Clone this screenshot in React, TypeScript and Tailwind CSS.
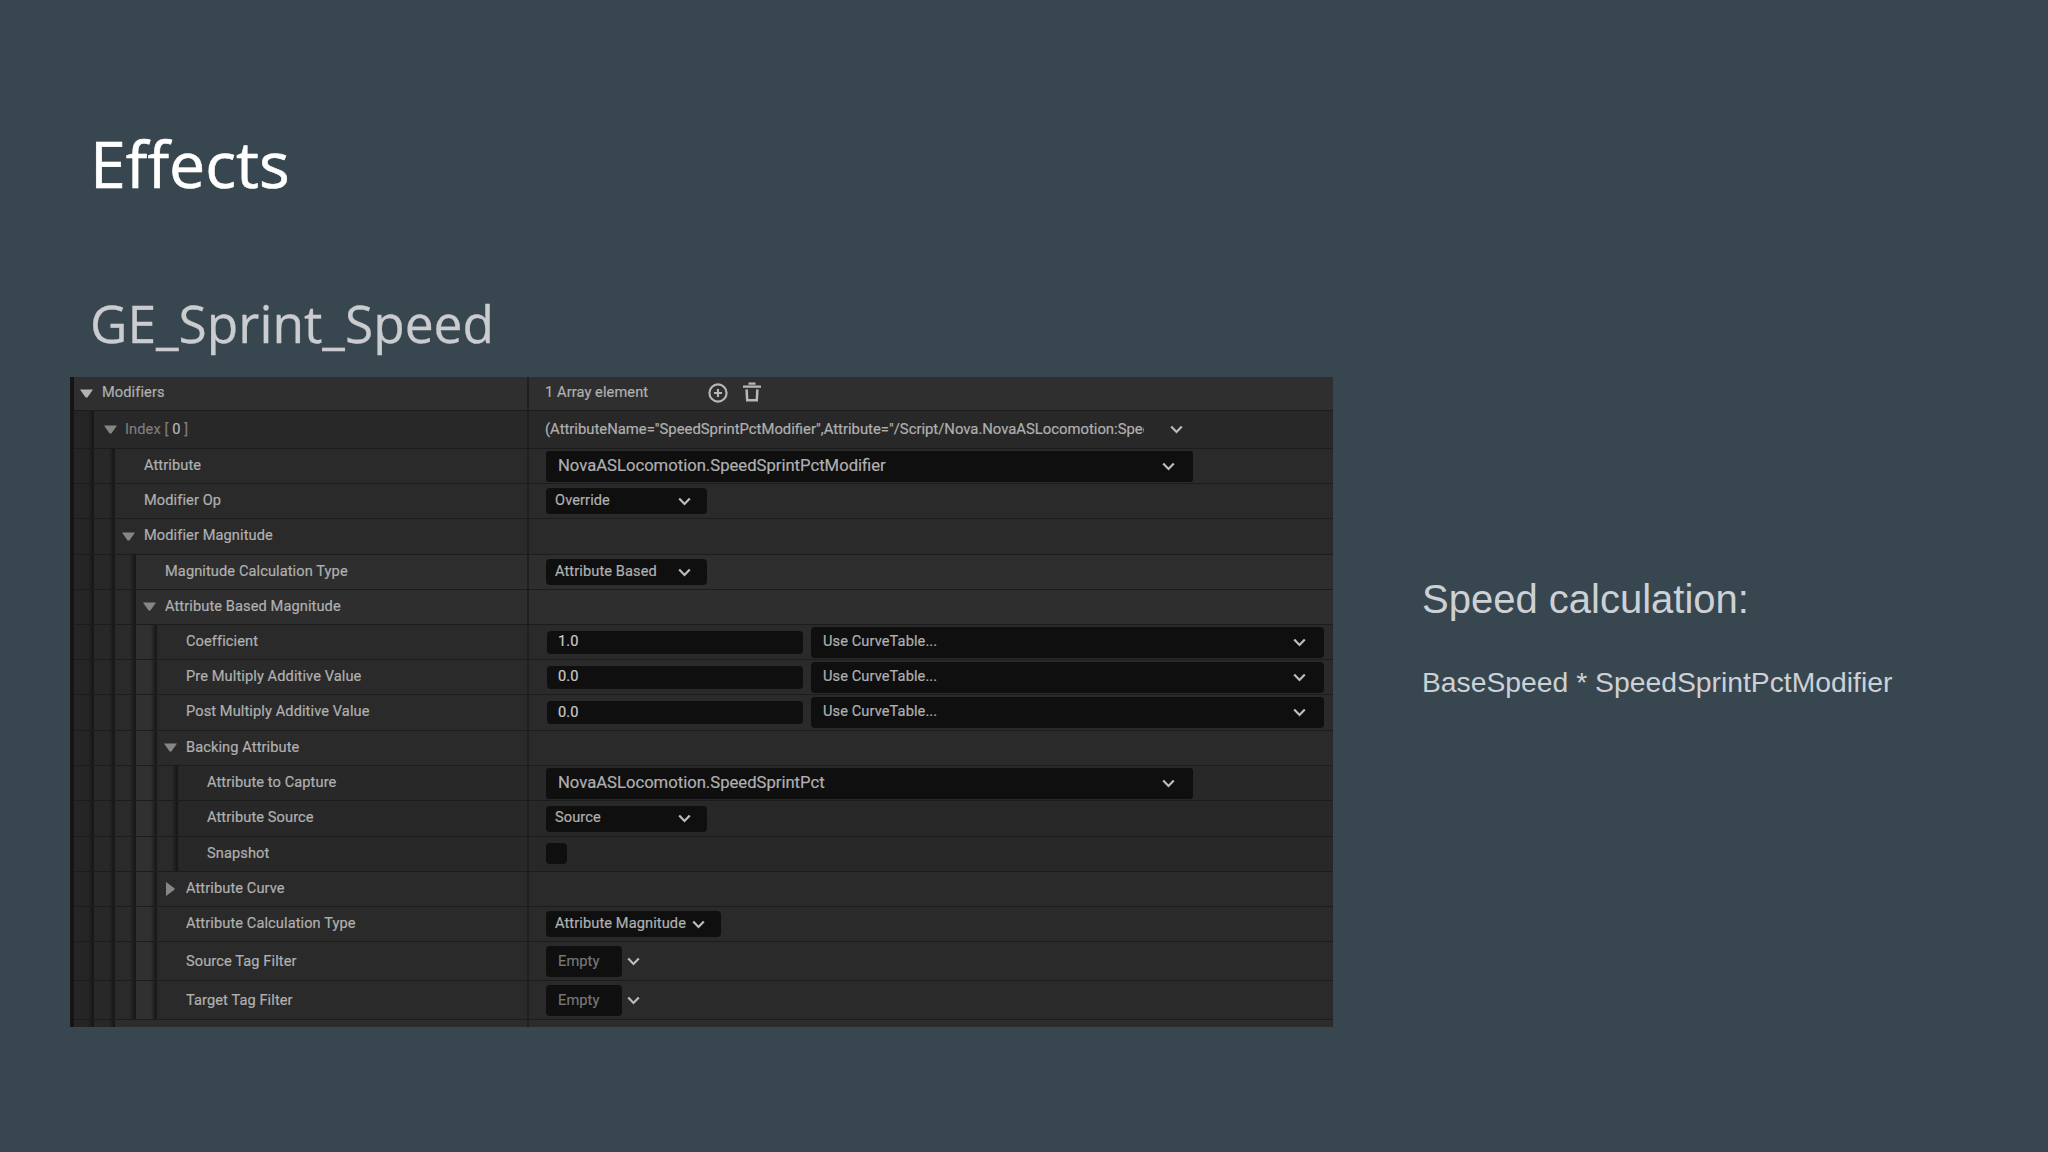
import React from 'react';
import { clsx } from 'clsx';

type Row = {
  name: React.ReactNode;
  depth: number;
  height: string;
  arrow?: 'open' | 'closed';
  tone?: string;
  nameClass?: string;
  value?: React.ReactNode;
};

function Chevron({ className }: { className?: string }) {
  return (
    <svg className={clsx('w-[13px] h-[9px] shrink-0', className)} viewBox="0 0 13 9" fill="none">
      <path d="M1.2 1.4 6.5 6.9 11.8 1.4" stroke="#bdbdbd" strokeWidth="2.2" />
    </svg>
  );
}

function Arrow({ state, bright }: { state?: 'open' | 'closed'; bright?: boolean }) {
  return (
    <svg className="w-[13px] h-[14px] shrink-0" viewBox="0 0 13 14">
      {state === 'open' && <path d="M0 2.6H13L7.4 10.6H5.6Z" fill={bright ? '#b4b4b4' : '#868686'} />}
      {state === 'closed' && <path d="M2 0 10.5 6.2V7.8L2 14Z" fill="#868686" />}
    </svg>
  );
}

function Combo({ label, width, pad = 'pr-4' }: { label: string; width: string; pad?: string }) {
  return (
    <div className={clsx('h-[26px] pl-[9px] flex items-center justify-between rounded-[4px] bg-[#0f0f0f]', width, pad)}>
      <span className="-mt-px">{label}</span>
      <Chevron />
    </div>
  );
}

function AttributePicker({ label }: { label: string }) {
  return (
    <div className="w-[647px] h-[31px] pl-3 pr-[18px] flex items-center justify-between rounded-[3px] bg-[#0f0f0f] text-[16.65px] tracking-normal">
      <span>{label}</span>
      <Chevron />
    </div>
  );
}

function ScalableFloat({ value }: { value: string }) {
  return (
    <div className="flex items-center gap-2 ml-px">
      <div className="w-[256px] h-[23px] pl-[11px] flex items-center rounded-[4px] bg-[#0f0f0f] text-[#cacaca]">
        <span>{value}</span>
      </div>
      <div className="w-[513px] h-[31px] pl-3 pr-[18px] flex items-center justify-between rounded-[4px] bg-[#0f0f0f]">
        <span className="-mt-px">Use CurveTable...</span>
        <Chevron />
      </div>
    </div>
  );
}

function TagFilter() {
  return (
    <div className="flex items-center gap-[5px]">
      <div className="w-[76px] h-[31px] pl-3 flex items-center rounded-[4px] bg-[#0f0f0f] text-[#777]">
        <span className="mt-px">Empty</span>
      </div>
      <Chevron />
    </div>
  );
}

function ArrayHeader() {
  return (
    <div className="-ml-px flex items-center">
      <span className="w-[163px] -mt-[2px]">1 Array element</span>
      <svg className="w-5 h-5 -mt-px" viewBox="0 0 20 20" fill="none" stroke="#b8b8b8">
        <circle cx="10" cy="10" r="8.6" strokeWidth="2.1" />
        <path d="M10 6V14M6 10H14" strokeWidth="2.1" />
      </svg>
      <svg className="w-[18px] h-5 ml-[15px] -mt-[2px]" viewBox="0 0 18 20" fill="none" stroke="#b8b8b8">
        <path d="M0 4.6H18M5.5 1.6H12.5" strokeWidth="2.4" />
        <path d="M3.6 7.4 4.2 18.2H13.8L14.4 7.4" strokeWidth="2.5" />
      </svg>
    </div>
  );
}

function StructSummary() {
  return (
    <div className="-ml-px flex items-center">
      <span className="w-[599px] overflow-hidden whitespace-nowrap text-[14.84px] tracking-normal -mt-px">
        (AttributeName="SpeedSprintPctModifier",Attribute="/Script/Nova.NovaASLocomotion:Spee
      </span>
      <Chevron className="ml-[26px]" />
    </div>
  );
}

const indentWidths = ['w-[20px]', 'w-[21px]', 'w-[21px]', 'w-[21px]', 'w-[21px]'];
const indentTones = ['from-[#252525]', 'from-[#282828]', 'from-[#2a2a2a]', 'from-[#303030]', 'from-[#2a2a2a]'];

const rows: Row[] = [
  { name: 'Modifiers', depth: 0, height: 'h-[34px]', arrow: 'open', tone: 'bg-[#2f2f2f]', nameClass: '-mt-[2px]', value: <ArrayHeader /> },
  {
    name: <>Index [ <span className="text-[#b8b8b8]">0</span> ]</>,
    depth: 1,
    height: 'h-[38px]',
    arrow: 'open',
    tone: 'bg-[#282828]',
    nameClass: 'text-[#7d7d7d] -ml-px',
    value: <StructSummary />,
  },
  { name: 'Attribute', depth: 2, height: 'h-[35px]', value: <AttributePicker label="NovaASLocomotion.SpeedSprintPctModifier" /> },
  { name: 'Modifier Op', depth: 2, height: 'h-[35px]', value: <Combo label="Override" width="w-[161px]" /> },
  { name: 'Modifier Magnitude', depth: 2, height: 'h-[36px]', arrow: 'open' },
  { name: 'Magnitude Calculation Type', depth: 3, height: 'h-[35px]', tone: 'bg-[#2e2e2e]', value: <Combo label="Attribute Based" width="w-[161px]" /> },
  { name: 'Attribute Based Magnitude', depth: 3, height: 'h-[35px]', arrow: 'open', tone: 'bg-[#2e2e2e]' },
  { name: 'Coefficient', depth: 4, height: 'h-[35px]', value: <ScalableFloat value="1.0" /> },
  { name: 'Pre Multiply Additive Value', depth: 4, height: 'h-[35px]', value: <ScalableFloat value="0.0" /> },
  { name: 'Post Multiply Additive Value', depth: 4, height: 'h-[36px]', value: <ScalableFloat value="0.0" /> },
  { name: 'Backing Attribute', depth: 4, height: 'h-[35px]', arrow: 'open' },
  { name: 'Attribute to Capture', depth: 5, height: 'h-[35px]', tone: 'bg-[#282828]', value: <AttributePicker label="NovaASLocomotion.SpeedSprintPct" /> },
  { name: 'Attribute Source', depth: 5, height: 'h-[36px]', tone: 'bg-[#282828]', value: <Combo label="Source" width="w-[161px]" /> },
  { name: 'Snapshot', depth: 5, height: 'h-[35px]', tone: 'bg-[#282828]', value: <div className="w-[21px] h-[21px] -mt-px rounded-[4px] bg-[#0f0f0f]" /> },
  { name: 'Attribute Curve', depth: 4, height: 'h-[35px]', arrow: 'closed' },
  { name: 'Attribute Calculation Type', depth: 4, height: 'h-[35px]', value: <Combo label="Attribute Magnitude" width="w-[175px]" /> },
  { name: 'Source Tag Filter', depth: 4, height: 'h-[39px]', nameClass: 'mt-px', value: <TagFilter /> },
  { name: 'Target Tag Filter', depth: 4, height: 'h-[39px]', nameClass: 'mt-px', value: <TagFilter /> },
];

function Indents({ depth }: { depth: number }) {
  return (
    <>
      {indentWidths.slice(0, depth).map((width, i) => (
        <div key={i} className={clsx('shrink-0 bg-linear-to-r from-70% to-[#181818] to-95%', width, indentTones[i])} />
      ))}
    </>
  );
}

function DetailsPanel() {
  return (
    <div className="w-[1263px] h-[650px] border-l-4 border-[#151515] bg-[#2a2a2a] font-['Roboto',sans-serif] text-[14.6px] tracking-[0.1px] text-[#b0b0b0] [-webkit-text-stroke:0.2px] whitespace-nowrap overflow-hidden">
      {rows.map((row, i) => (
        <div key={i} className={clsx('flex border-b border-[#1c1c1c]', row.height, row.tone)}>
          <div className="w-[455px] shrink-0 flex border-r-2 border-[#1f1f1f]">
            <Indents depth={row.depth} />
            <div
              className={clsx(
                'flex items-center gap-[9px]',
                row.depth === 0 ? 'pl-[6px]' : row.depth === 1 ? 'pl-[10px]' : 'pl-[7px]'
              )}
            >
              <Arrow state={row.arrow} bright={row.depth === 0} />
              <span className={row.nameClass ?? '-mt-px'}>{row.name}</span>
            </div>
          </div>
          <div className="flex-1 pl-[17px] flex items-center">{row.value}</div>
        </div>
      ))}
      {/* Top of the next, cut off row */}
      <div className="h-[7px] flex bg-[#2d2c2d]">
        <div className="w-[455px] flex border-r-2 border-[#1f1f1f]">
          <Indents depth={2} />
        </div>
      </div>
    </div>
  );
}

export default function App() {
  return (
    <div className="w-[2048px] h-[1152px] flex bg-[#38474f] overflow-hidden">
      <div className="w-[1333px] pl-[70px] pt-[123px] shrink-0">
        <h1 className="pl-5 font-['Open_Sans',sans-serif] text-[64.4px] leading-[80px] text-white [-webkit-text-stroke:0.6px_white]">Effects</h1>
        <h2 className="pl-5 mt-[88px] mb-[22px] font-['Open_Sans',sans-serif] text-[51.5px] leading-[64px] text-[#cbccd0] [-webkit-text-stroke:0.3px]">
          GE_Sprint_Speed
        </h2>
        <DetailsPanel />
      </div>
      <div className="pl-[89px] pt-[575px] font-['Liberation_Sans',sans-serif] text-[#cdd1d5] whitespace-nowrap">
        <p className="text-[40px] leading-[48px]">Speed calculation:</p>
        <p className="mt-[42px] text-[28.3px] leading-[34px]">BaseSpeed * SpeedSprintPctModifier</p>
      </div>
    </div>
  );
}
